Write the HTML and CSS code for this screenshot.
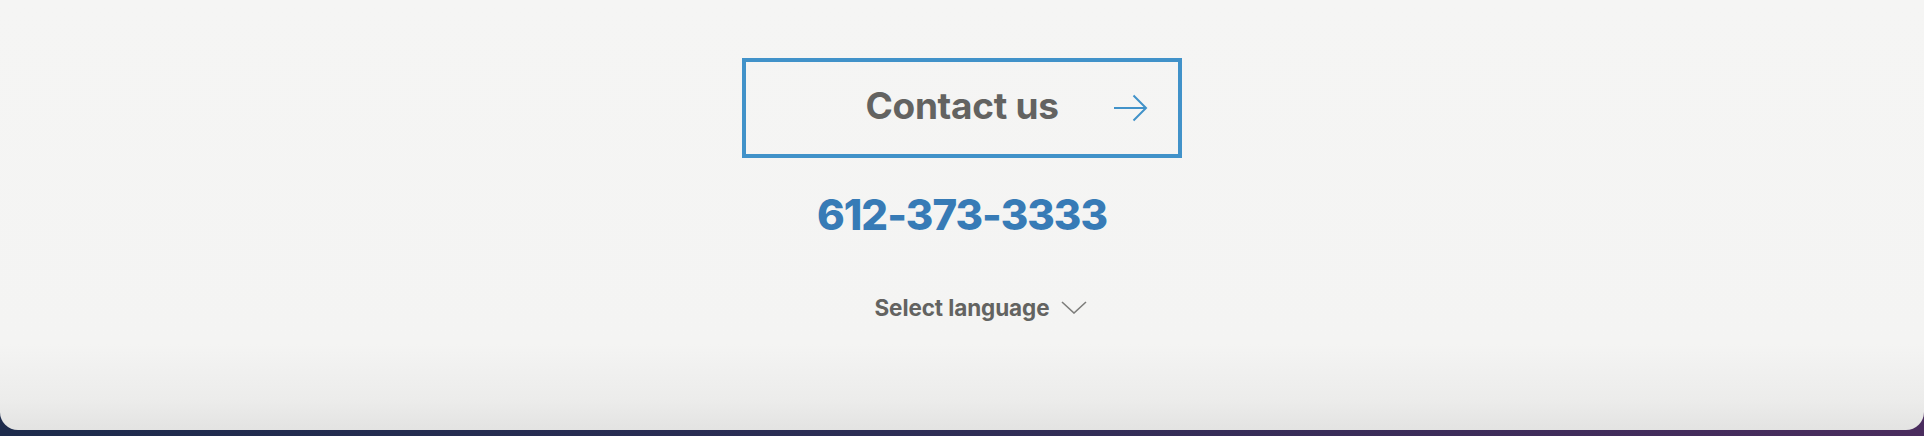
FILE: index.html
```html
<!DOCTYPE html>
<html lang="en">
<head>
<meta charset="utf-8">
<title>Contact</title>
<link rel="stylesheet" href="styles.css">
</head>
<body>
<div class="page">
  <section class="card">
    <a class="contact-btn" href="#">
      <span class="contact-label">Contact us</span>
      <svg class="contact-arrow" width="34" height="28" viewBox="0 0 34 28" aria-hidden="true">
        <path d="M0 14 H32 M19.5 1.5 L32 14 L19.5 26.5" fill="none" stroke="#4192c9" stroke-width="2"/>
      </svg>
    </a>
    <a class="phone" href="#">612-373-3333</a>
    <div class="lang">
      <span class="lang-label">Select language</span>
      <svg class="lang-chevron" width="26" height="13" viewBox="0 0 26 13" aria-hidden="true">
        <path d="M1 1 L13 12 L25 1" fill="none" stroke="#7d7d7b" stroke-width="1.6"/>
      </svg>
    </div>
  </section>
</div>
</body>
</html>
```

FILE: styles.css
```css
html, body {
  margin: 0;
  padding: 0;
}

body {
  width: 1924px;
  height: 436px;
  overflow: hidden;
  background: linear-gradient(90deg, #1d2b4c 0%, #2c2d55 45%, #4a2c5e 100%);
  font-family: Inter, "Noto Sans", sans-serif;
}

.page {
  height: 436px;
}

.card {
  height: 430px;
  box-sizing: border-box;
  padding-top: 58px;
  background: linear-gradient(180deg, #f5f5f4 0%, #f4f4f3 80%, #ececeb 93%, #e3e3e2 100%);
  border-radius: 0 0 18px 18px;
  display: flex;
  flex-direction: column;
  align-items: center;
}

.contact-btn {
  position: relative;
  width: 440px;
  height: 100px;
  box-sizing: border-box;
  border: 4px solid #4192c9;
  display: flex;
  align-items: center;
  justify-content: center;
  text-decoration: none;
  color: #636361;
}

.contact-label {
  font-size: 37px;
  font-weight: 700;
  line-height: 1;
  letter-spacing: -0.3px;
  padding-bottom: 5px;
}

.contact-arrow {
  position: absolute;
  right: 30px;
  top: 32px;
}

.phone {
  margin-top: 36px;
  font-size: 42px;
  line-height: 42px;
  font-weight: 800;
  color: #377bb6;
  text-decoration: none;
  letter-spacing: -1px;
}

.lang {
  position: relative;
  margin-top: 60px;
  display: flex;
  align-items: center;
}

.lang-label {
  font-size: 22.5px;
  line-height: 23px;
  font-weight: 700;
  color: #636361;
  letter-spacing: -0.1px;
}

.lang-chevron {
  position: absolute;
  left: calc(100% + 11px);
  top: 5px;
}
```
